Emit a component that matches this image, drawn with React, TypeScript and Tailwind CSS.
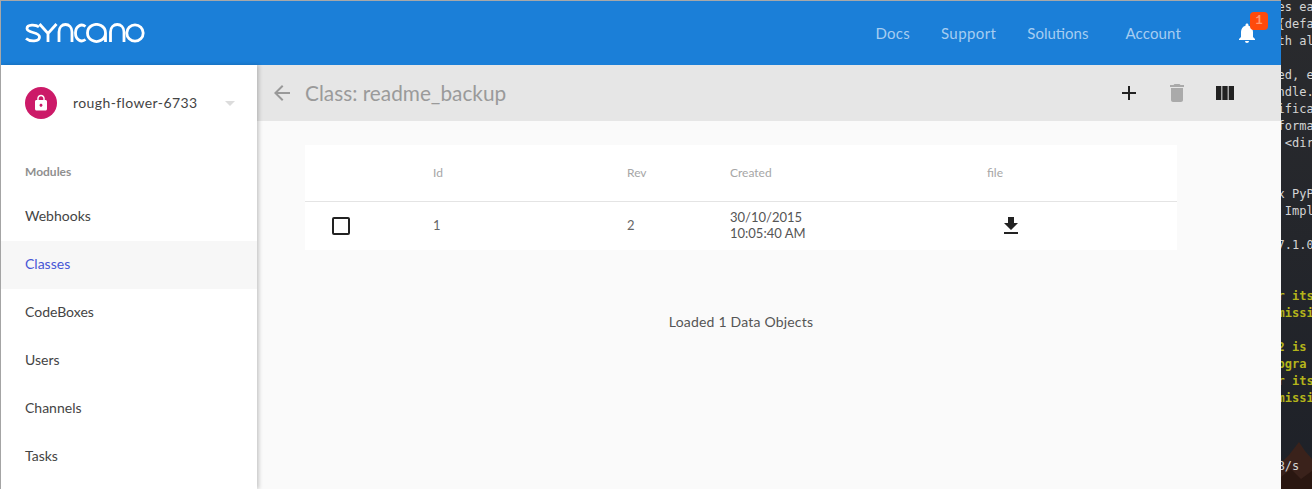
import React from 'react';
import { MdAdd, MdArrowBack, MdDelete, MdFileDownload, MdLock, MdNotifications, MdViewColumn } from 'react-icons/md';

const modules = ['Webhooks', 'Classes', 'CodeBoxes', 'Users', 'Channels', 'Tasks'];

const terminalLines: { text: string; yellow?: boolean }[] = [
  { text: 'es eac' },
  { text: '{defa' },
  { text: 'th al' },
  { text: '' },
  { text: 'ed, ev' },
  { text: 'ndle.' },
  { text: 'ifica' },
  { text: 'forma' },
  { text: ' <dir' },
  { text: '' },
  { text: '' },
  { text: 'x PyP' },
  { text: ' Impl' },
  { text: '' },
  { text: '7.1.0' },
  { text: '' },
  { text: '' },
  { text: 'r its', yellow: true },
  { text: 'missi', yellow: true },
  { text: '' },
  { text: '2 is ', yellow: true },
  { text: 'pgra', yellow: true },
  { text: 'r its', yellow: true },
  { text: 'missi', yellow: true },
  { text: '' },
  { text: '' },
  { text: '' },
  { text: 'B/s' },
];

const Logo = () => (
  <svg className="-ml-px" width="120" height="20" viewBox="0 0 120 20" fill="none" stroke="white" strokeWidth="2.8" aria-label="syncano">
    <path d="M14 4 C11 1.5 2 1 2 5.5 C2 10.5 14.5 8.5 14.5 14 C14.5 19 5 19 1 15.5" />
    <path d="M14.5 1 L23 10.5 L31.5 1 M23 10.5 V19" />
    <path d="M34 19 V9 C34 -1 47 -1 47 9 V19" />
    <path d="M60.5 3.5 C56 0 50.5 3.5 50.5 10 C50.5 16.5 56 20 60.5 16.5" />
    <path d="M80.5 10 A9 8.5 0 1 1 80.5 9.9 V19" />
    <path d="M85.5 19 V9 C85.5 -1 99 -1 99 9 V19" />
    <circle cx="110" cy="10" r="8.2" />
  </svg>
);

const App: React.FC = () => (
  <div className="flex h-screen w-full overflow-hidden bg-[#24262a] font-['Lato',sans-serif]">
    <div className="flex w-[1281px] shrink-0 flex-col border-t border-l border-[#a8a8a8] bg-[#fafafa]">
      <header className="flex h-16 shrink-0 items-center bg-[#1b7fd8] pr-[13px] pl-[25px]">
        <Logo />
        <nav className="ml-auto flex items-center gap-[31px] text-[15px] text-[#a6cdf1]">
          <a className="tracking-[0.25px]">Docs</a>
          <a className="tracking-[0.4px]">Support</a>
          <a>Solutions</a>
          <a className="ml-[6px] tracking-[0.15px]">Account</a>
        </nav>
        <div className="relative mr-[9px] ml-[54px] flex items-center">
          <MdNotifications className="text-white" size={24} />
          <span className="absolute -top-[9px] left-[15px] flex h-[18px] w-[18px] items-center justify-center rounded-sm bg-[#ff4a0b] font-['Liberation_Mono',monospace] text-xs font-bold text-[#ff9a70]">1</span>
        </div>
      </header>

      <div className="flex min-h-0 flex-1">
        <aside className="relative z-10 w-64 shrink-0 bg-white shadow-[2px_0_4px_rgba(0,0,0,0.2)]">
          <div className="flex h-[76px] items-center pr-[22px] pl-6">
            <div className="flex size-8 items-center justify-center rounded-full bg-[#cc1a68]">
              <MdLock className="text-white" size={18} />
            </div>
            <span className="ml-4 text-sm tracking-[0.4px] text-[#444]">rough-flower-6733</span>
            <span className="ml-auto h-0 w-0 border-x-[5px] border-t-[5px] border-x-transparent border-t-[#dcdcdc]" />
          </div>
          <div className="mt-[11px] flex h-[41px] items-center pb-px pl-6 text-xs font-bold text-[#8f8f8f]">Modules</div>
          {modules.map((item) => (
            <div key={item} className={item === 'Classes' ? 'flex h-12 items-center bg-[#f7f7f7] pb-[2px] pl-6 text-sm text-[#4656d6]' : 'flex h-12 items-center pb-[2px] pl-6 text-sm text-[#444]'}>
              {item}
            </div>
          ))}
        </aside>

        <main className="flex min-w-0 flex-1 flex-col">
          <div className="flex h-14 shrink-0 items-center bg-[#e6e6e6] pr-[44px] pl-[13px]">
            <MdArrowBack className="text-[#999]" size={24} />
            <h1 className="ml-[11px] text-[20.8px] text-[#9a9a9a]">Class: readme_backup</h1>
            <div className="ml-auto flex items-center gap-6 text-[#222]">
              <MdAdd size={24} />
              <MdDelete className="text-[#aaa]" size={24} />
              <MdViewColumn size={24} />
            </div>
          </div>

          <div className="pt-6 pr-[104px] pl-12">
            <div className="bg-white">
              <div className="flex h-[57px] items-center border-b border-[#e4e4e4] text-xs text-[#a6a6a6]">
                <div className="w-32" />
                <div className="w-[194px]">Id</div>
                <div className="w-[103px]">Rev</div>
                <div className="w-[257px]">Created</div>
                <div>file</div>
              </div>
              <div className="flex h-12 items-center text-[13px] text-[#666]">
                <div className="w-32 pl-[27px]">
                  <div className="size-[18px] rounded-[2px] border-2 border-[#222]" />
                </div>
                <div className="w-[194px]">1</div>
                <div className="w-[103px]">2</div>
                <div className="w-[257px] pb-[2px] leading-4 text-[#555]">
                  30/10/2015
                  <br />
                  10:05:40 AM
                </div>
                <div className="pl-3 text-[#222]">
                  <MdFileDownload size={24} />
                </div>
              </div>
            </div>
            <p className="mt-[62px] text-center text-sm tracking-[0.2px] text-[#555]">Loaded 1 Data Objects</p>
          </div>
        </main>
      </div>
    </div>

    <div className="relative min-w-0 flex-1 overflow-hidden bg-gradient-to-b from-[#2a2b2e] to-[#1e2128]">
      <svg className="absolute right-0 bottom-0 left-0" width="31" height="50" viewBox="0 0 31 50" aria-hidden="true">
        <path d="M0 50 V24 L8 16 L18 3 L24 12 L31 20 V50 Z" fill="#3a221b" />
        <path d="M0 50 V38 L10 30 L20 40 L31 32 V50 Z" fill="#2a1711" />
      </svg>
      <div className="relative -mt-px -ml-[3.5px] font-['DejaVu_Sans_Mono',monospace] text-xs leading-[17px] whitespace-pre text-[#d4d4d4]">
        {terminalLines.map((line, i) => (
          <div key={i} className={line.yellow ? 'h-[17px] font-bold text-[#b4b41a]' : 'h-[17px]'}>
            {line.text}
          </div>
        ))}
      </div>
    </div>
  </div>
);

export default App;
